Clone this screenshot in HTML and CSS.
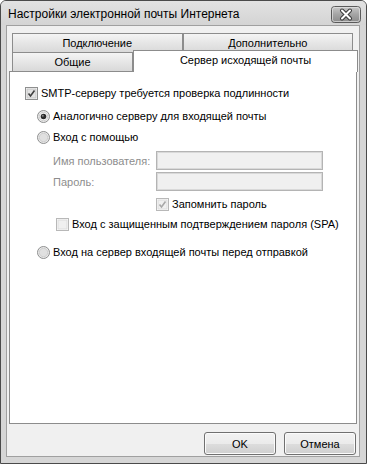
FILE: index.html
```html
<!DOCTYPE html>
<html lang="ru">
<head>
<meta charset="utf-8">
<link rel="stylesheet" href="styles.css">
</head>
<body>
<div class="window">
  <div class="titlebar">
    <span class="title">Настройки электронной почты Интернета</span>
    <span class="close">
      <svg width="30" height="17" viewBox="0 0 30 17">
        <defs>
          <linearGradient id="cg" x1="0" y1="0" x2="0" y2="1">
            <stop offset="0" stop-color="#c8c8c8"/>
            <stop offset="0.5" stop-color="#a4a4a4"/>
            <stop offset="1" stop-color="#8a8a8a"/>
          </linearGradient>
        </defs>
        <rect x="0.5" y="0.5" width="29" height="16" rx="3" fill="url(#cg)" stroke="#5a5a5a"/>
        <rect x="1.5" y="1.5" width="27" height="14" rx="2" fill="none" stroke="#e4e4e4" stroke-opacity="0.7"/>
        <path d="M11 4.5 L19 12.5 M19 4.5 L11 12.5" stroke="#3a3a3a" stroke-width="4" stroke-linecap="round"/>
        <path d="M11 4.5 L19 12.5 M19 4.5 L11 12.5" stroke="#ffffff" stroke-width="2" stroke-linecap="round"/>
      </svg>
    </span>
  </div>
  <div class="client">
    <div class="tabs">
      <div class="tabrow">
        <div class="tab">Подключение</div>
        <div class="tab">Дополнительно</div>
      </div>
      <div class="tabrow">
        <div class="tab tab-general">Общие</div>
        <div class="tab tab-active">Сервер исходящей почты</div>
      </div>
    </div>
    <div class="panel">
      <div class="row r-smtp">
        <svg class="cb" width="13" height="13" viewBox="0 0 13 13">
          <rect x="0.5" y="0.5" width="12" height="12" fill="#fff" stroke="#8e8f8f"/>
          <rect x="2" y="2" width="9" height="9" fill="#e3e3e3" stroke="#c4c4c4"/>
          <path d="M3.5 6.5 L5.5 9 L9.5 3.5" fill="none" stroke="#404040" stroke-width="1.6"/>
        </svg>
        <span>SMTP-серверу требуется проверка подлинности</span>
      </div>
      <div class="row r-radio1 indent">
        <svg class="rb" width="13" height="13" viewBox="0 0 13 13">
          <circle cx="6.5" cy="6.5" r="6" fill="#eaeaea" stroke="#8e8f8f"/>
          <circle cx="6.5" cy="6.5" r="4.2" fill="#f7f7f7" stroke="#cfcfcf"/>
          <circle cx="6.5" cy="6.5" r="2.8" fill="#2a2a2a"/>
          <circle cx="5.8" cy="5.7" r="1" fill="#8a8a8a"/>
        </svg>
        <span>Аналогично серверу для входящей почты</span>
      </div>
      <div class="row r-radio2 indent">
        <svg class="rb" width="13" height="13" viewBox="0 0 13 13">
          <circle cx="6.5" cy="6.5" r="6" fill="#eaeaea" stroke="#8e8f8f"/>
          <circle cx="6.5" cy="6.5" r="4.2" fill="#e0e0e0" stroke="#cfcfcf"/>
        </svg>
        <span>Вход с помощью</span>
      </div>
      <div class="field r-user">
        <span class="flabel">Имя пользователя:</span>
        <span class="input"></span>
      </div>
      <div class="field r-pass">
        <span class="flabel">Пароль:</span>
        <span class="input"></span>
      </div>
      <div class="row r-remember">
        <svg class="cb" width="13" height="13" viewBox="0 0 13 13">
          <rect x="0.5" y="0.5" width="12" height="12" fill="#fff" stroke="#b8b8b8"/>
          <rect x="2" y="2" width="9" height="9" fill="#f0f0f0" stroke="#dcdcdc"/>
          <path d="M3.5 6.5 L5.5 9 L9.5 3.5" fill="none" stroke="#a8a8a8" stroke-width="1.6"/>
        </svg>
        <span>Запомнить пароль</span>
      </div>
      <div class="row r-spa">
        <svg class="cb" width="13" height="13" viewBox="0 0 13 13">
          <rect x="0.5" y="0.5" width="12" height="12" fill="#fff" stroke="#b8b8b8"/>
          <rect x="2" y="2" width="9" height="9" fill="#f0f0f0" stroke="#dcdcdc"/>
        </svg>
        <span>Вход с защищенным подтверждением пароля (SPA)</span>
      </div>
      <div class="row r-radio3 indent">
        <svg class="rb" width="13" height="13" viewBox="0 0 13 13">
          <circle cx="6.5" cy="6.5" r="6" fill="#eaeaea" stroke="#8e8f8f"/>
          <circle cx="6.5" cy="6.5" r="4.2" fill="#e0e0e0" stroke="#cfcfcf"/>
        </svg>
        <span>Вход на сервер входящей почты перед отправкой</span>
      </div>
    </div>
    <div class="buttons">
      <button class="btn">OK</button>
      <button class="btn">Отмена</button>
    </div>
  </div>
</div>
</body>
</html>
```

FILE: styles.css
```css
* { box-sizing: border-box; }
html, body { margin: 0; padding: 0; background: #fff; }
body {
  font-family: "Liberation Sans", Arial, sans-serif;
  font-size: 11px;
  color: #000;
}
.window {
  width: 367px;
  height: 464px;
  border: 1px solid #4a4a4a;
  border-radius: 6px 6px 0 0;
  background: #d6d6d6;
  display: flex;
  flex-direction: column;
  padding: 0 6px 6px 5px;
}
.titlebar {
  height: 24px;
  display: flex;
  align-items: center;
  justify-content: space-between;
  background: linear-gradient(#e2e2e2, #d4d4d4);
  margin: 0 -6px 0 -5px;
  padding-left: 7px;
  padding-right: 5px;
  border-radius: 5px 5px 0 0;
}
.title {
  font-size: 12px;
  color: #000;
  padding-top: 1px;
}
.close { display: flex; padding-top: 2px; }
.client {
  flex: 1;
  background: #f0f0f0;
  border: 1px solid #a0a0a0;
  padding: 7px 2px 0 2px;
  display: flex;
  flex-direction: column;
}
.tabs {
  display: flex;
  flex-direction: column;
}
.tabrow {
  display: flex;
  padding-left: 3px;
}
.tabrow:first-child { padding-right: 4px; }
.tab {
  flex: 1;
  height: 19px;
  border: 1px solid #8c8c8c;
  border-bottom: none;
  background: linear-gradient(#f4f4f4, #e6e6e6 50%, #d9d9d9);
  display: flex;
  align-items: center;
  justify-content: center;
  color: #000;
  white-space: nowrap;
}
.tab-general {
  flex: 0 0 121px;
}
.tab-active {
  flex: 1;
  background: #fff;
  height: 22px;
  margin-top: -2px;
  margin-bottom: -1px;
  position: relative;
  z-index: 1;
  margin-right: -1px;
  align-items: flex-start;
  padding-top: 3px;
}
.panel {
  height: 353px;
  background: #fff;
  border: 1px solid #8c8c8c;
  padding: 11px 0 0 15px;
  display: flex;
  flex-direction: column;
}
.row {
  display: flex;
  align-items: center;
  height: 20px;
  white-space: nowrap;
}
.row svg { flex: none; margin-right: 3px; }
.indent { padding-left: 12px; }
.r-radio1 { margin-top: 3px; }
.r-radio2 { margin-top: 1px; }
.field {
  display: flex;
  align-items: center;
  height: 19px;
  padding-left: 28px;
  white-space: nowrap;
}
.r-user { margin-top: 4px; }
.r-pass { margin-top: 2px; }
.flabel {
  flex: none;
  width: 103px;
  color: #8d8d8d;
}
.input {
  flex: none;
  width: 167px;
  height: 19px;
  border: 1px solid #b4b4b4;
  background: #f0f0f0;
  box-shadow: inset 0 0 0 1px #d9d9d9;
}
.r-remember { margin-top: 3px; padding-left: 131px; }
.r-spa { padding-left: 31px; }
.r-radio3 { margin-top: 8px; }
.buttons {
  display: flex;
  justify-content: flex-end;
  gap: 8px;
  padding: 8px 1px 0 0;
}
.btn {
  width: 72px;
  height: 23px;
  border: 1px solid #707070;
  border-radius: 3px;
  background: linear-gradient(#f2f2f2, #ebebeb 50%, #dddddd 51%, #cfcfcf);
  box-shadow: inset 0 0 0 1px #fbfbfb;
  font-family: "Liberation Sans", Arial, sans-serif;
  font-size: 11px;
  color: #000;
  padding: 0;
}
```
